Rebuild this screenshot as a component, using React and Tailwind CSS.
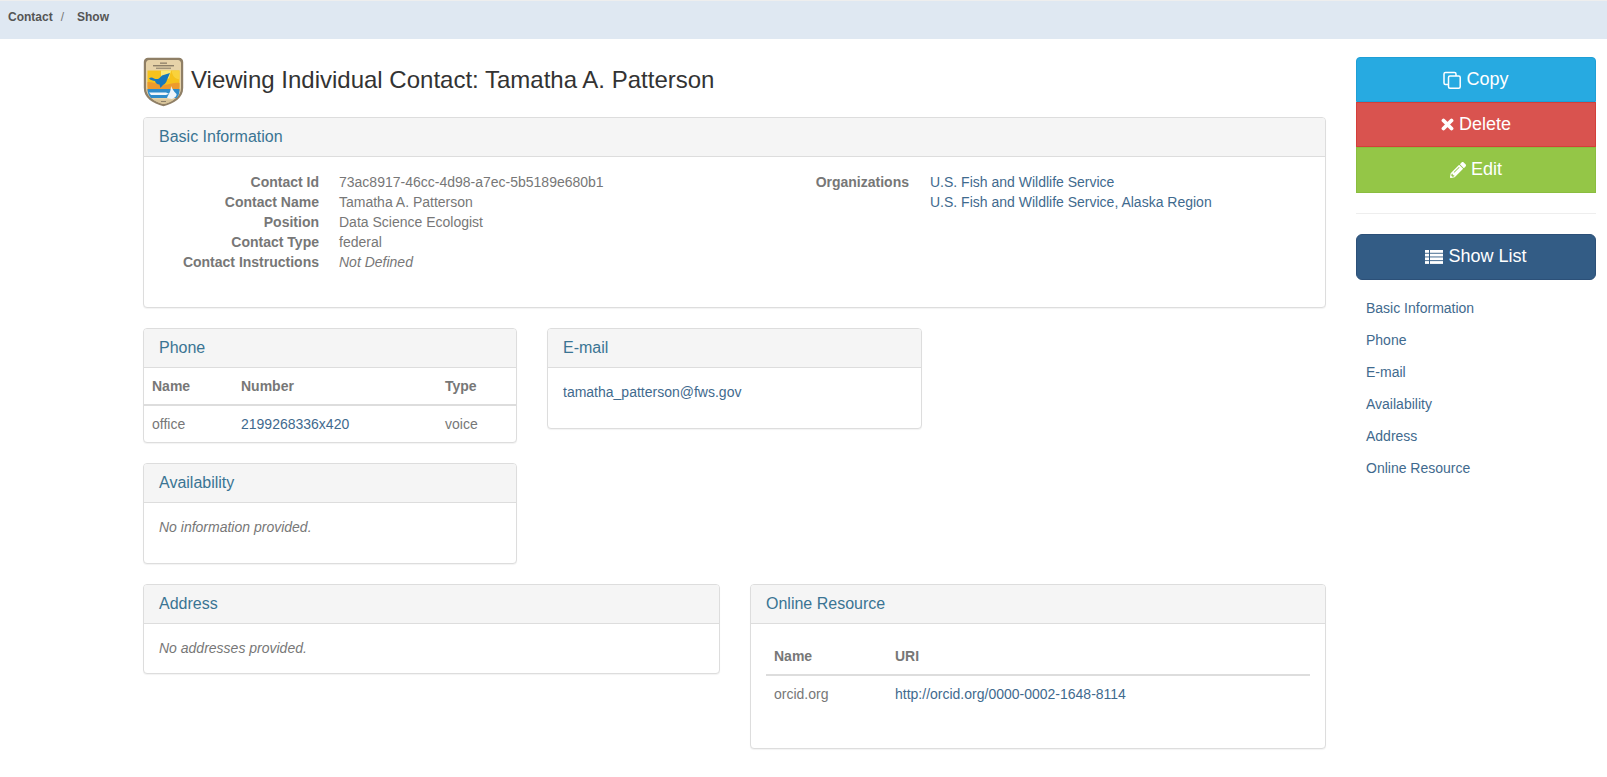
import React from "react";
import { FaPencilAlt } from "react-icons/fa";

const Panel = ({ title, className = "", bodyClass = "", children }) => (
  <div className={"rounded border border-[#ddd] bg-white shadow-[0_1px_1px_rgba(0,0,0,0.05)] " + className}>
    <div className="h-[39px] rounded-t-[3px] border-b border-[#ddd] bg-[#f5f5f5] px-[15px] pt-[10px] text-[16px] leading-[17.6px] text-[#3a7493]">{title}</div>
    <div className={bodyClass}>{children}</div>
  </div>
);

const Row = ({ k, children }) => (
  <div className="flex h-[20px] leading-[20px]">
    <div className="w-[175px] shrink-0 text-right font-bold">{k}</div>
    <div className="ml-[20px]">{children}</div>
  </div>
);

const Shield = () => (
  <svg viewBox="0 0 41 50" className="h-[50px] w-[41px] shrink-0">
    <path d="M5 .8h31c2.500 0 4.200 1.700 4.200 4.200v26c0 9.500-8.700 15.500-19.700 18.300C9.500 46.500.8 40.500.8 31V5C.8 2.500 2.500.8 5 .8z" fill="#8f7f66" />
    <path d="M6 3h29c1.500 0 3 1.500 3 3v25c0 8-7.500 13.500-17.500 16C10.500 44.500 3 39 3 31V6c0-1.500 1.500-3 3-3z" fill="#e6d2a8" />
    <rect x="17" y="5.500" width="7" height="1.300" fill="#8d7f68" />
    <rect x="10" y="8" width="21" height="1.400" fill="#8d7f68" />
    <rect x="13" y="10.600" width="15" height="1.300" fill="#9a8c74" />
    <path d="M4.500 13.500h32v17h-32z" fill="#f6c21c" />
    <path d="M4.500 13.500h32v9c-5-1-7-3.500-8-9z" fill="#f9d23c" />
    <path d="M18 13.500h10l-2 8h-8z" fill="#fde978" />
    <path d="M4.500 25c6-.5 11 3 16 3 6 0 11-3 16-2v8h-32z" fill="#ed9a2e" />
    <path d="M4.500 32h32c0 4-.5 6-3 9H8c-2.500-3-3.500-5-3.500-9z" fill="#2f8ccb" />
    <path d="M6 35.500h17l3 1.200-3 1.300H8z" fill="#f2f7fb" />
    <path d="M24 41c1.500-4 4-6 4-12 1.500 2.500 2 5 5.500 8 .5 2-2 4-4.500 5z" fill="#eef5fa" />
    <path d="M6 21.500c1.500-1.500 3.500-1 5 0 2 .8 3.500.6 5 0l3-3 8-2.500-3 7c-.7 2.500-2 4-4 5l-2.500 3-1-3.500c-2.500 0-4-1.500-4.500-3.500-2-.5-4-.5-6-2.500z" fill="#1878bd" />
    <path d="M10 42.500h21c-3 2.500-6.500 4-10.500 4.500-4-1-7.500-2.500-10.500-4.500z" fill="#d8c49a" />
    <rect x="18" y="44" width="5" height="1" fill="#8d7f68" />
  </svg>
);

const Btn = ({ className = "", children }) => (
  <div className={"flex items-center justify-center gap-[5px] border text-[18px] text-white " + className}>{children}</div>
);

const CopyIcon = () => (
  <svg viewBox="0 0 18 18" width="18" height="18" fill="none" stroke="#fff" strokeWidth="1.500">
    <rect x="5.500" y="5" width="11.700" height="12.200" rx="1.500" />
    <path d="M13 5V3a1.500 1.500 0 0 0-1.500-1.500H2.500A1.500 1.500 0 0 0 1 3v9a1.500 1.500 0 0 0 1.500 1.500h3" />
  </svg>
);

const XIcon = () => (
  <svg viewBox="0 0 13 13" width="13" height="13" stroke="#fff" strokeWidth="3.800" strokeLinecap="round">
    <path d="M2.500 2.500l8 8M10.500 2.500l-8 8" />
  </svg>
);

const ListIcon = () => (
  <svg viewBox="0 0 18 14" width="18" height="14" fill="#fff">
    {[0, 3.700, 7.400, 11.100].map(y => (
      <g key={y}>
        <rect x="0" y={y} width="4" height="2.800" />
        <rect x="5" y={y} width="13" height="2.800" />
      </g>
    ))}
  </svg>
);

const LINK = "text-[#3f6a8e]";

export default function App() {
  return (
    <div className="min-h-[777px] bg-white font-['Liberation_Sans',Arial,sans-serif] text-[14px] text-[#777]">
      <div className="h-[39px] border-t border-[#eee] bg-[#dfe8f2] pl-[8px] pt-[9px] text-[12px] font-bold leading-[15px] text-[#555]">
        <span>Contact</span>
        <span className="ml-[8px] font-normal text-[#777]">/</span>
        <span className="ml-[13px]">Show</span>
      </div>
      <div className="flex pl-[143px] pr-[11px]">
        <div className="w-[1183px] shrink-0">
          <div className="mt-[18px] flex h-[50px] items-center gap-[7px]">
            <Shield />
            <h1 className="pb-[5px] text-[24px] leading-[26px] text-[#333]">Viewing Individual Contact: Tamatha A. Patterson</h1>
          </div>
          <Panel title="Basic Information" className="mt-[10px] h-[191px]" bodyClass="flex pt-[15px]">
            <div className="w-[507px] shrink-0">
              <Row k="Contact Id">73ac8917-46cc-4d98-a7ec-5b5189e680b1</Row>
              <Row k="Contact Name">Tamatha A. Patterson</Row>
              <Row k="Position">Data Science Ecologist</Row>
              <Row k="Contact Type">federal</Row>
              <Row k="Contact Instructions"><em>Not Defined</em></Row>
            </div>
            <div className="flex leading-[20px]">
              <div className="w-[258px] shrink-0 text-right font-bold">Organizations</div>
              <div className={"ml-[21px] " + LINK}>
                <div>U.S. Fish and Wildlife Service</div>
                <div>U.S. Fish and Wildlife Service, Alaska Region</div>
              </div>
            </div>
          </Panel>
          <div className="mt-[20px] flex gap-[30px]">
            <div className="w-[374px] shrink-0">
              <Panel title="Phone" className="h-[115px]">
                <table className="w-full table-fixed border-collapse">
                  <thead>
                    <tr className="h-[37px] border-b-2 border-[#ddd] text-left">
                      <th className="w-[97px] pl-[8px]">Name</th>
                      <th className="w-[204px]">Number</th>
                      <th>Type</th>
                    </tr>
                  </thead>
                  <tbody>
                    <tr className="h-[37px]">
                      <td className="pl-[8px]">office</td>
                      <td className={LINK}>2199268336x420</td>
                      <td>voice</td>
                    </tr>
                  </tbody>
                </table>
              </Panel>
              <Panel title="Availability" className="mt-[20px] h-[101px]" bodyClass="px-[15px] pt-[14px] leading-[20px]">
                <em>No information provided.</em>
              </Panel>
            </div>
            <div className="w-[375px] shrink-0">
              <Panel title="E-mail" className="h-[101px]" bodyClass={"px-[15px] pt-[14px] leading-[20px] " + LINK}>
                tamatha_patterson@fws.gov
              </Panel>
            </div>
          </div>
          <div className="mt-[20px] flex gap-[30px]">
            <Panel title="Address" className="h-[90px] w-[577px] shrink-0" bodyClass="px-[15px] pt-[14px] leading-[20px]">
              <em>No addresses provided.</em>
            </Panel>
            <Panel title="Online Resource" className="h-[165px] w-[576px] shrink-0" bodyClass="px-[15px] pt-[14px]">
              <table className="w-full border-collapse">
                <thead>
                  <tr className="h-[37px] border-b-2 border-[#ddd] text-left">
                    <th className="w-[129px] pl-[8px]">Name</th>
                    <th>URI</th>
                  </tr>
                </thead>
                <tbody>
                  <tr className="h-[37px]">
                    <td className="pl-[8px]">orcid.org</td>
                    <td className={LINK}>http://orcid.org/0000-0002-1648-8114</td>
                  </tr>
                </tbody>
              </table>
            </Panel>
          </div>
        </div>
        <div className="ml-[30px] w-[240px] shrink-0 pt-[18px]">
          <Btn className="h-[45px] rounded-t border-[#1f9fd6] bg-[#27aae1]"><CopyIcon />Copy</Btn>
          <Btn className="h-[45px] border-[#d43f3a] bg-[#d9534f]"><XIcon />Delete</Btn>
          <Btn className="h-[46px] border-[#8abd3f] bg-[#94c647] pb-[1px]"><FaPencilAlt size={16} />Edit</Btn>
          <div className="mt-[20px] border-t border-[#eee]" />
          <Btn className="mt-[20px] h-[46px] rounded-md border-[#2c5078] bg-[#335c85] pb-[1px]"><ListIcon />Show List</Btn>
          <div className={"mt-[12px] " + LINK}>
            {["Basic Information", "Phone", "E-mail", "Availability", "Address", "Online Resource"].map(t => (
              <div key={t} className="h-[32px] pl-[10px] leading-[32px]">{t}</div>
            ))}
          </div>
        </div>
      </div>
    </div>
  );
}
